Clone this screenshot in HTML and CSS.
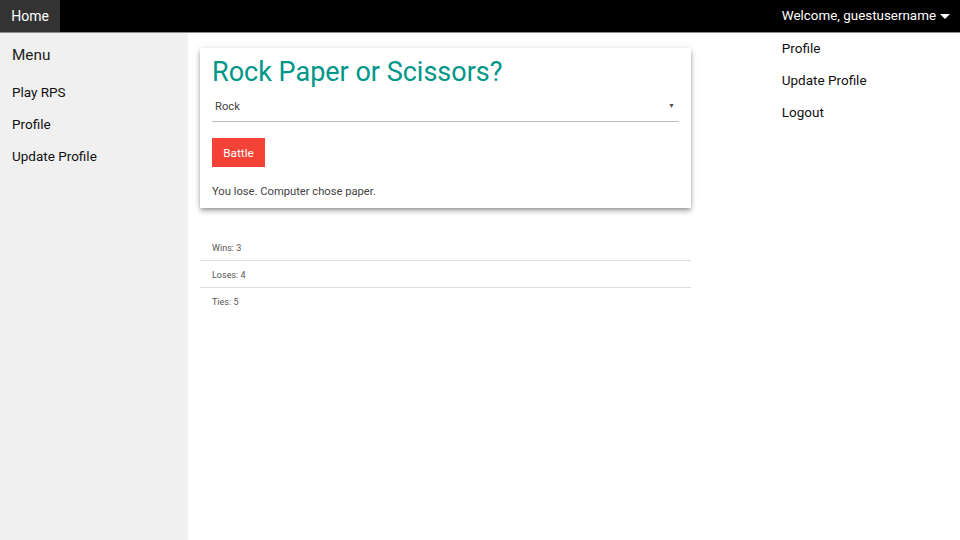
FILE: index.html
```html
<!DOCTYPE html>
<html>
<head>
<meta charset="utf-8">
<link rel="stylesheet" href="styles.css">
</head>
<body>
<header class="topbar">
  <a class="home-tab">Home</a>
  <div class="user">
    <span class="welcome">Welcome, guestusername<span class="caret"></span></span>
    <ul class="dropdown">
      <li>Profile</li>
      <li>Update Profile</li>
      <li>Logout</li>
    </ul>
  </div>
</header>
<div class="layout">
  <aside class="sidebar">
    <h2 class="menu-title">Menu</h2>
    <ul class="side-links">
      <li>Play RPS</li>
      <li>Profile</li>
      <li>Update Profile</li>
    </ul>
  </aside>
  <main class="main">
    <section class="card">
      <h1 class="title">Rock Paper or Scissors?</h1>
      <div class="select">
        <span>Rock</span>
        <span class="arrow">▼</span>
      </div>
      <button class="battle">Battle</button>
      <p class="result">You lose. Computer chose paper.</p>
    </section>
    <ul class="stats">
      <li>Wins: 3</li>
      <li>Loses: 4</li>
      <li>Ties: 5</li>
    </ul>
  </main>
</div>
</body>
</html>
```
FILE: styles.css
```css
* { box-sizing: border-box; }
html, body { margin: 0; padding: 0; height: 100%; }
body {
  font-family: Roboto, "Noto Sans", sans-serif;
  background: #fff;
  color: #000;
  display: flex;
  flex-direction: column;
}
.topbar {
  height: 33px;
  background: #000;
  border-bottom: 1px solid #8a8a8a;
  display: flex;
  justify-content: space-between;
  align-items: stretch;
  position: relative;
  flex: none;
}
.home-tab {
  width: 60px;
  background: #333;
  color: #fff;
  font-size: 14px;
  display: flex;
  align-items: center;
  justify-content: center;
  padding-bottom: 1px;
}
.user { position: relative; padding-right: 10px; display: flex; align-items: center; }
.welcome { color: #fff; font-size: 13.4px; display: flex; align-items: center; padding-bottom: 1px; }
.caret {
  display: inline-block;
  width: 0; height: 0;
  border-left: 5px solid transparent;
  border-right: 5px solid transparent;
  border-top: 5px solid #fff;
  margin-left: 4px;
  margin-top: 1px;
}
.dropdown {
  position: absolute;
  top: 33px;
  left: 0;
  margin: 0;
  padding: 0;
  list-style: none;
}
.dropdown li {
  font-size: 13.5px;
  height: 32px;
  line-height: 30px;
  color: #111;
  white-space: nowrap;
}
.layout { flex: 1; display: flex; }
.sidebar {
  width: 188px;
  background: #f0f0f0;
  padding: 12px 12px;
}
.menu-title {
  margin: 0;
  font-weight: 400;
  font-size: 15.3px;
  color: #222;
  height: 31px;
  line-height: 20px;
}
.side-links { list-style: none; margin: 0; padding: 0; }
.side-links li {
  font-size: 13.5px;
  color: #111;
  height: 32px;
  line-height: 32px;
}
.main { width: 515px; padding: 15px 12px 0; }
.card {
  background: #fff;
  box-shadow: 0 4px 5px 0 rgba(0,0,0,.14), 0 1px 8px 0 rgba(0,0,0,.12), 0 2px 4px -1px rgba(0,0,0,.3);
  padding: 6px 12px 12px;
  height: 160px;
}
.title {
  margin: 0;
  font-weight: 400;
  font-size: 27px;
  color: #009688;
  line-height: 36px;
}
.select {
  margin-top: 1px;
  height: 31px;
  border-bottom: 1px solid #bdbdbd;
  display: flex;
  justify-content: space-between;
  align-items: center;
  padding: 0 4px 0 3px;
  font-size: 11.2px;
  color: #444;
}
.arrow { font-size: 7px; color: #555; }
.battle {
  margin-top: 16px;
  display: block;
  width: 53px;
  height: 29px;
  background: #f44336;
  color: #fff;
  border: none;
  font-family: inherit;
  font-size: 11.8px;
  padding: 0;
}
.result {
  margin: 18px 0 0;
  font-size: 11.2px;
  color: #444;
}
.stats { list-style: none; margin: 26px 0 0; padding: 0; }
.stats li {
  height: 27px;
  line-height: 28px;
  font-size: 9px;
  color: #555;
  padding-left: 12px;
  border-bottom: 1px solid #ddd;
}
.stats li:last-child { border-bottom: none; }
```
